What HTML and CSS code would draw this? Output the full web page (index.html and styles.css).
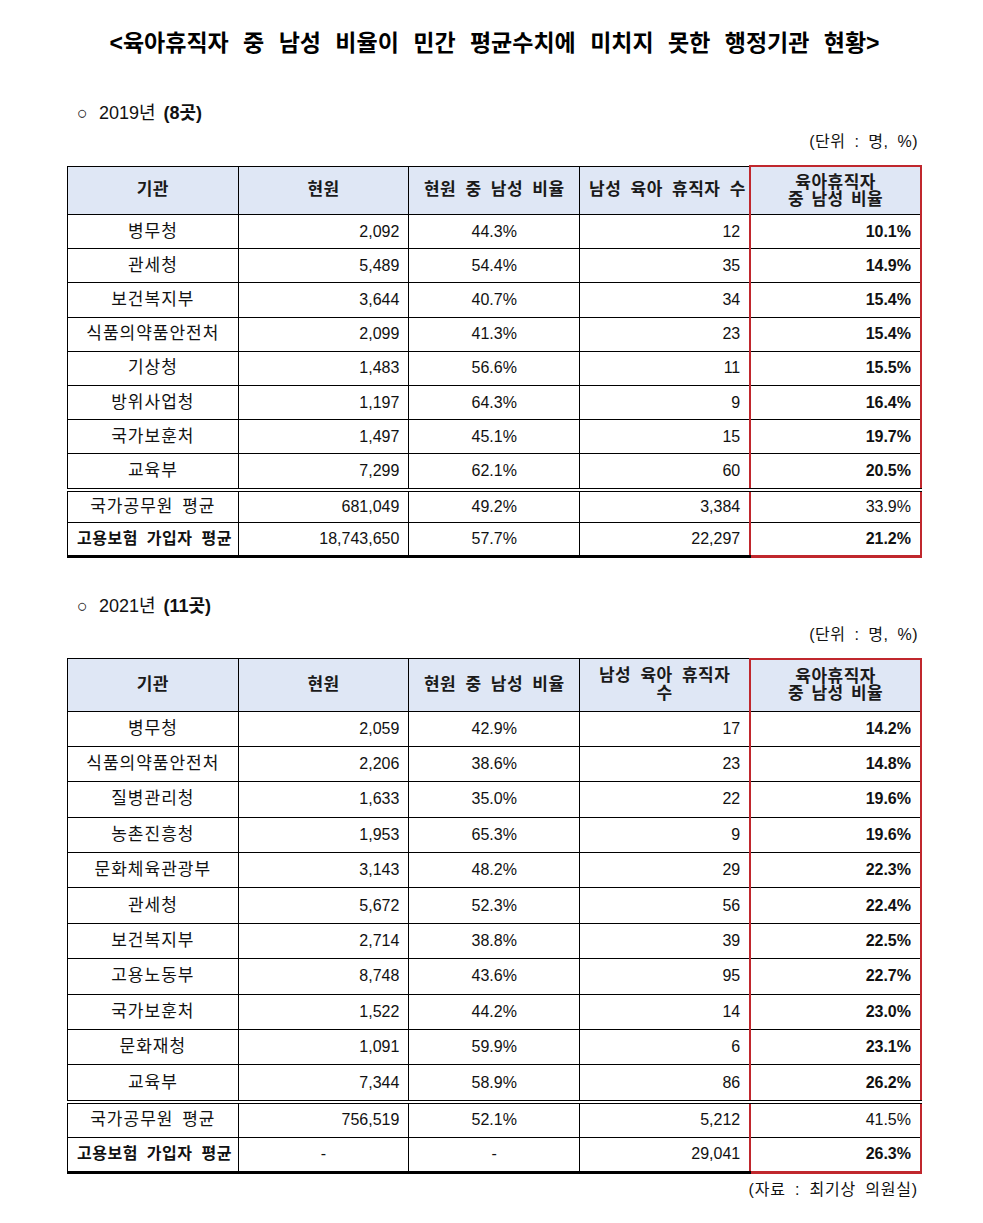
FILE: index.html
```html
<!DOCTYPE html>
<html lang="ko">
<head>
<meta charset="utf-8">
<title>육아휴직자 중 남성 비율</title>
<link rel="stylesheet" href="styles.css">
</head>
<body>
<div class="page">
  <h1 class="title">&lt;육아휴직자 중 남성 비율이 민간 평균수치에 미치지 못한 행정기관 현황&gt;</h1>

  <div class="section first"><span class="bullet">○</span> 2019년 <b>(8곳)</b></div>
  <div class="unit">(단위 : 명, %)</div>
  <table class="data t1">
    <thead>
      <tr><th>기관</th><th>현원</th><th>현원 중 남성 비율</th><th>남성 육아 휴직자 수</th><th class="hl">육아휴직자<br>중 남성 비율</th></tr>
    </thead>
    <tbody>
      <tr><td>병무청</td><td class="r">2,092</td><td>44.3%</td><td class="r">12</td><td class="hl r b">10.1%</td></tr>
      <tr><td>관세청</td><td class="r">5,489</td><td>54.4%</td><td class="r">35</td><td class="hl r b">14.9%</td></tr>
      <tr><td>보건복지부</td><td class="r">3,644</td><td>40.7%</td><td class="r">34</td><td class="hl r b">15.4%</td></tr>
      <tr><td>식품의약품안전처</td><td class="r">2,099</td><td>41.3%</td><td class="r">23</td><td class="hl r b">15.4%</td></tr>
      <tr><td>기상청</td><td class="r">1,483</td><td>56.6%</td><td class="r">11</td><td class="hl r b">15.5%</td></tr>
      <tr><td>방위사업청</td><td class="r">1,197</td><td>64.3%</td><td class="r">9</td><td class="hl r b">16.4%</td></tr>
      <tr><td>국가보훈처</td><td class="r">1,497</td><td>45.1%</td><td class="r">15</td><td class="hl r b">19.7%</td></tr>
      <tr><td>교육부</td><td class="r">7,299</td><td>62.1%</td><td class="r">60</td><td class="hl r b">20.5%</td></tr>
      <tr class="avg"><td>국가공무원 평균</td><td class="r">681,049</td><td>49.2%</td><td class="r">3,384</td><td class="hl r">33.9%</td></tr>
      <tr class="last"><td class="b">고용보험 가입자 평균</td><td class="r">18,743,650</td><td>57.7%</td><td class="r">22,297</td><td class="hl r b">21.2%</td></tr>
    </tbody>
  </table>

  <div class="section second"><span class="bullet">○</span> 2021년 <b>(11곳)</b></div>
  <div class="unit">(단위 : 명, %)</div>
  <table class="data t2">
    <thead>
      <tr><th>기관</th><th>현원</th><th>현원 중 남성 비율</th><th class="two">남성 육아 휴직자<br>수</th><th class="hl">육아휴직자<br>중 남성 비율</th></tr>
    </thead>
    <tbody>
      <tr><td>병무청</td><td class="r">2,059</td><td>42.9%</td><td class="r">17</td><td class="hl r b">14.2%</td></tr>
      <tr><td>식품의약품안전처</td><td class="r">2,206</td><td>38.6%</td><td class="r">23</td><td class="hl r b">14.8%</td></tr>
      <tr><td>질병관리청</td><td class="r">1,633</td><td>35.0%</td><td class="r">22</td><td class="hl r b">19.6%</td></tr>
      <tr><td>농촌진흥청</td><td class="r">1,953</td><td>65.3%</td><td class="r">9</td><td class="hl r b">19.6%</td></tr>
      <tr><td>문화체육관광부</td><td class="r">3,143</td><td>48.2%</td><td class="r">29</td><td class="hl r b">22.3%</td></tr>
      <tr><td>관세청</td><td class="r">5,672</td><td>52.3%</td><td class="r">56</td><td class="hl r b">22.4%</td></tr>
      <tr><td>보건복지부</td><td class="r">2,714</td><td>38.8%</td><td class="r">39</td><td class="hl r b">22.5%</td></tr>
      <tr><td>고용노동부</td><td class="r">8,748</td><td>43.6%</td><td class="r">95</td><td class="hl r b">22.7%</td></tr>
      <tr><td>국가보훈처</td><td class="r">1,522</td><td>44.2%</td><td class="r">14</td><td class="hl r b">23.0%</td></tr>
      <tr><td>문화재청</td><td class="r">1,091</td><td>59.9%</td><td class="r">6</td><td class="hl r b">23.1%</td></tr>
      <tr><td>교육부</td><td class="r">7,344</td><td>58.9%</td><td class="r">86</td><td class="hl r b">26.2%</td></tr>
      <tr class="avg"><td>국가공무원 평균</td><td class="r">756,519</td><td>52.1%</td><td class="r">5,212</td><td class="hl r">41.5%</td></tr>
      <tr class="last"><td class="b">고용보험 가입자 평균</td><td>-</td><td>-</td><td class="r">29,041</td><td class="hl r b">26.3%</td></tr>
    </tbody>
  </table>
  <div class="source">(자료 : 최기상 의원실)</div>
</div>
</body>
</html>
```

FILE: styles.css
```css
html, body {
  margin: 0;
  padding: 0;
  background: #ffffff;
}
body {
  font-family: "Liberation Sans", "Noto Sans CJK KR", sans-serif;
  color: #111111;
}
.page {
  width: 855px;
  margin-left: 67px;
  padding-top: 30px;
}
.title {
  margin: 0;
  font-size: 23px;
  line-height: 26px;
  font-weight: bold;
  text-align: center;
  word-spacing: 8px;
  letter-spacing: 0;
  color: #000;
}
.section {
  font-size: 18px;
  line-height: 22px;
  padding-left: 10px;
  word-spacing: 3px;
}
.section.first { margin-top: 46px; }
.section.second { margin-top: 37px; }
.bullet {
  font-size: 18px;
  margin-right: 3px;
}
.unit {
  margin-top: 8px;
  font-size: 16px;
  line-height: 20px;
  text-align: right;
  padding-right: 4px;
  word-spacing: 4px;
  letter-spacing: 0.5px;
}
.data {
  margin-top: 13px;
  width: 855px;
  border-collapse: collapse;
  table-layout: fixed;
  font-size: 16px;
}
.data th, .data td {
  border: 1px solid #000;
  padding: 0 9px;
  text-align: center;
  white-space: nowrap;
}
.data th {
  background: #dfe7f5;
  font-weight: bold;
  font-size: 17px;
  letter-spacing: 0.5px;
  height: 47px;
  line-height: 18px;
  word-spacing: 4px;
  color: #1a1a1a;
}
.t2 th { height: 51px; }
.data th.hl { line-height: 17px; word-spacing: 2px; }
.data td {
  height: 33.2px;
  line-height: 20px;
}
.data td:first-child {
  font-size: 17px;
  letter-spacing: 1px;
  word-spacing: 3px;
}
.data td.b:first-child {
  font-size: 16px;
  letter-spacing: 0.5px;
  word-spacing: 4px;
}
.t2 td { height: 34.4px; }
.data td.r { text-align: right; }
.data .b { font-weight: bold; }
.data tr.avg td {
  border-top: 4px double #000;
  height: 30px;
}
.t2 tr.avg td { height: 33px; }
.data tr.last td {
  border-bottom: 3px solid #000;
  height: 32px;
}
.t2 tr.last td { height: 33px; }
.data .hl {
  border-left: 2px solid #c0272d;
  border-right: 2px solid #c0272d;
}
.data th.hl { border-top: 2px solid #c0272d; }
.data tr.last td.hl { border-bottom: 3px solid #c0272d; }
.source {
  margin-top: 6px;
  font-size: 16px;
  line-height: 20px;
  text-align: right;
  padding-right: 4px;
  word-spacing: 4px;
  letter-spacing: 0.8px;
}
```
